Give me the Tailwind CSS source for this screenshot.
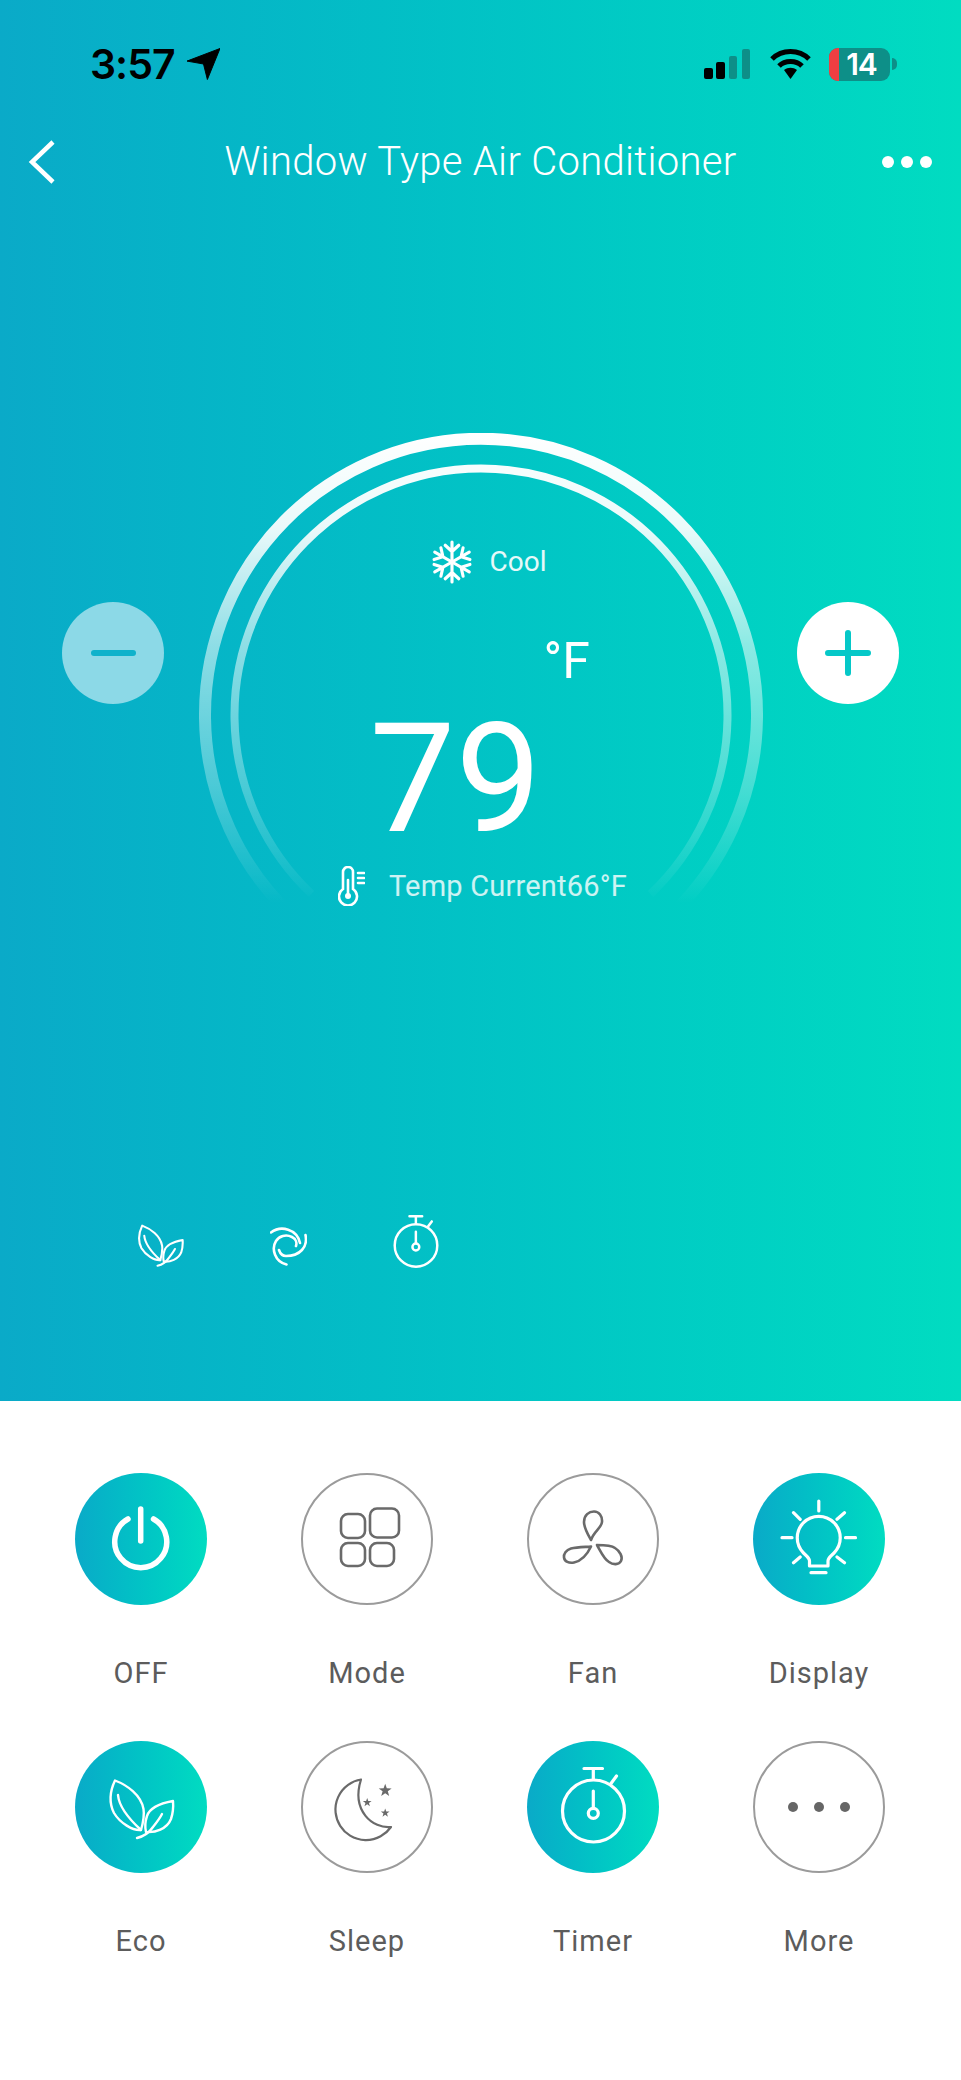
<!DOCTYPE html>
<html lang="en">
<head>
    <meta charset="UTF-8">
    <meta name="viewport" content="width=device-width, initial-scale=1.0">
    <title>Window Type Air Conditioner</title>
    <script src="https://cdn.jsdelivr.net/npm/@tailwindcss/browser@4"></script>
</head>
<body class="w-[961px] h-[2080px] bg-white overflow-hidden font-['Roboto',sans-serif]">

    <!-- control panel top -->
    <section class="h-[1401px] flex flex-col bg-gradient-to-r from-[#0aaac8] to-[#01dcc1] text-white">

        <!-- status bar -->
        <div class="h-[128px] flex items-center pl-[90px] pr-[64px] text-black">
            <span class="font-['Inter',sans-serif] font-semibold text-[41px] leading-none tracking-[-1px]">3:57</span>
            <svg class="ml-[12px] w-[33px] h-[32px]" viewBox="0 0 34 32"><path d="M34 0 L21 32 L17 16 L0 13 Z" fill="#000" stroke="#000" stroke-width="1" stroke-linejoin="round"/></svg>
            <svg class="ml-auto w-[47px] h-[30px]" viewBox="0 0 47 30">
                <rect x="0" y="19" width="9" height="11" rx="2" fill="#000"/>
                <rect x="12" y="13" width="9" height="17" rx="2" fill="#000"/>
                <rect x="25" y="7" width="8" height="23" rx="2" fill="#0d8f88"/>
                <rect x="38" y="0" width="8" height="30" rx="2" fill="#0d8f88"/>
            </svg>
            <svg class="ml-[19px] w-[41px] h-[30px]" viewBox="0 0 41 30" fill="none" stroke="#000" stroke-width="5">
                <path d="M2 10 C12 0 29 0 39 10"/>
                <path d="M9 17 C15 11 26 11 32 17"/>
                <path d="M14 21 L20.5 30 L27 21 C23 18 18 18 14 21Z" fill="#000" stroke="none"/>
            </svg>
            <div class="relative ml-[18px] w-[61px] h-[33px] rounded-[9px] bg-[#0d8f88] overflow-hidden flex items-center justify-center">
                <div class="absolute left-0 top-0 bottom-0 w-[10px] bg-[#ef3e42]"></div>
                <span class="font-['Inter',sans-serif] font-semibold text-white text-[30px] leading-none tracking-[-1px] ml-[4px]">14</span>
            </div>
            <div class="ml-[2px] w-[5px] h-[12px] rounded-r-full bg-[#0d8f88]"></div>
        </div>

        <!-- nav -->
        <div class="relative h-[68px] flex items-center justify-center">
            <svg class="absolute left-[28px] top-[12px] w-[28px] h-[44px]" viewBox="0 0 28 44" fill="none" stroke="#fff" stroke-width="4.5"><path d="M25 2 L4 22 L25 42"/></svg>
            <h1 class="font-[350] text-[40px] leading-none tracking-[0.3px]">Window Type Air Conditioner</h1>
            <div class="absolute right-[29px] top-[28px] flex gap-[7px]">
                <span class="w-[12px] h-[12px] rounded-full bg-white"></span>
                <span class="w-[12px] h-[12px] rounded-full bg-white"></span>
                <span class="w-[12px] h-[12px] rounded-full bg-white"></span>
            </div>
        </div>

        <!-- dial row -->
        <div class="mt-[237px] px-[62px] flex justify-between items-start">
            <button class="mt-[169px] w-[102px] h-[102px] rounded-full bg-[#8cd9e7] flex items-center justify-center">
                <span class="w-[45px] h-[6px] rounded-full bg-[#0fb2cb]"></span>
            </button>

            <div class="relative w-[564px] h-[482px] flex flex-col items-center pt-[108px]">
                <svg class="absolute left-0 top-0 w-[564px] h-[482px]" viewBox="0 0 564 482" fill="none">
                    <defs>
                        <linearGradient id="ringFade" gradientUnits="userSpaceOnUse" x1="0" y1="0" x2="0" y2="470">
                            <stop offset="0" stop-color="#fff"/>
                            <stop offset="0.2" stop-color="#fff" stop-opacity="0.92"/>
                            <stop offset="0.45" stop-color="#fff" stop-opacity="0.55"/>
                            <stop offset="0.75" stop-color="#fff" stop-opacity="0.28"/>
                            <stop offset="1" stop-color="#fff" stop-opacity="0"/>
                        </linearGradient>
                    </defs>
                    <path d="M91 481 A276 276 0 1 1 473 481" stroke="url(#ringFade)" stroke-width="12"/>
                    <path d="M112.5 461 A246.5 246.5 0 1 1 451.5 461" stroke="url(#ringFade)" stroke-width="8"/>
                </svg>

                <div class="relative h-[42px] flex items-center ml-[15px]">
                    <svg class="w-[44px] h-[44px]" viewBox="0 0 42 42" fill="none" stroke="#fff" stroke-width="3" stroke-linecap="round">
                        <g id="flakeArm"><path d="M21 21 V2 M14.5 5 L21 11 L27.5 5"/></g>
                        <use href="#flakeArm" transform="rotate(60 21 21)"/>
                        <use href="#flakeArm" transform="rotate(120 21 21)"/>
                        <use href="#flakeArm" transform="rotate(180 21 21)"/>
                        <use href="#flakeArm" transform="rotate(240 21 21)"/>
                        <use href="#flakeArm" transform="rotate(300 21 21)"/>
                    </svg>
                    <span class="ml-[16px] text-[28px] leading-none text-white/90">Cool</span>
                </div>

                <div class="relative self-start ml-[345px] mt-[53px] text-[50px] leading-none">°F</div>

                <div class="relative mt-[28px] -ml-[50px] font-normal text-[153px] leading-[130px]">79</div>

                <div class="relative mt-[22px] flex items-center ml-[4px]">
                    <svg class="w-[27px] h-[40px]" viewBox="0 0 27 40" fill="none" stroke="#fff" stroke-width="2.6" stroke-linecap="round">
                        <path d="M5 23 V6 A5 5 0 0 1 15 6 V23 A9 9 0 1 1 5 23Z"/>
                        <circle cx="10" cy="30" r="3" fill="#fff" stroke="none"/>
                        <path d="M10 29 V14"/>
                        <path d="M20 7 H26 M20 12 H26 M20 17 H26"/>
                    </svg>
                    <span class="ml-[24px] text-[29px] leading-none tracking-[0.2px] text-white/80">Temp Current66°F</span>
                </div>
            </div>

            <button class="mt-[169px] w-[102px] h-[102px] rounded-full bg-white flex items-center justify-center">
                <svg class="w-[46px] h-[46px]" viewBox="0 0 46 46" fill="none" stroke="#05c8c8" stroke-width="6" stroke-linecap="round"><path d="M23 3 V43 M3 23 H43"/></svg>
            </button>
        </div>

        <!-- status icons -->
        <div class="mt-auto pb-[132px] pl-[138px] flex items-end gap-[86px]">
            <svg class="w-[46px] h-[43px] mb-[2px]" viewBox="34 38 66 60" fill="none" stroke="#fff" stroke-width="3" stroke-linecap="round" stroke-linejoin="round">
                <path d="M40 39.5 C52 44 66 54 68.5 68 C69.5 74 68 82 66 89 C58 90 45 82 39 72 C34 62 35 50 40 39.5Z"/>
                <path d="M43 54 C44 66 54 78 66 89"/>
                <path d="M98 60 C87 62 75 66 72 75 C70 81 70 87 71 91 C80 92 92 88 96 78 C98 72 98.5 66 98 60Z"/>
                <path d="M62 97 C70 95 74 92 78 86 C82 81 85 77 87 73"/>
            </svg>
            <svg class="w-[37px] h-[39px] mb-[3px]" viewBox="0 0 37 39" fill="none" stroke="#fff" stroke-width="2.6" stroke-linecap="round">
                <path d="M1 5.5 C11 -2 27 2 30 16"/>
                <path d="M35.5 8 C38 20 30 29 16 29 C12 29 10 26 9 23"/>
                <path d="M16.5 37.5 C5 35 1 22 6 14 C9 9 16 7 22 10 C26 12 27 16 26 19"/>
            </svg>
            <svg class="w-[46px] h-[54px]" viewBox="33 26 67 78" fill="none" stroke="#fff" stroke-width="3.6" stroke-linecap="round">
                <circle cx="66.5" cy="70" r="31"/>
                <path d="M57 27.5 H75.5 M66.3 27.5 V38 M84 42.5 L89.5 35 M66.3 50 V66"/>
                <circle cx="66.3" cy="72.3" r="5"/>
            </svg>
        </div>
    </section>

    <!-- function buttons -->
    <section class="pt-[72px] pl-[28px] pr-[29px] grid grid-cols-4 gap-y-[50px] text-[#5c5c5c] text-[29px] leading-[36px] tracking-[1px]">

        <div class="flex flex-col items-center gap-[50px]">
            <div class="w-[132px] h-[132px] rounded-full bg-gradient-to-r from-[#0aaac8] to-[#01dcc1]">
                <svg class="w-[132px] h-[132px]" viewBox="0 0 132 132" fill="none" stroke="#fff" stroke-width="5.5" stroke-linecap="round">
                    <path d="M53 46 A26 26 0 1 0 78.5 46"/>
                    <path d="M65.7 36 V68"/>
                </svg>
            </div>
            <span>OFF</span>
        </div>

        <div class="flex flex-col items-center gap-[50px]">
            <div class="w-[132px] h-[132px] rounded-full border-2 border-[#9b9b9b]">
                <svg class="-m-[2px] w-[132px] h-[132px]" viewBox="0 0 132 132" fill="none" stroke="#6a6a6a" stroke-width="2.6">
                    <rect x="40" y="41" width="24" height="24" rx="7"/>
                    <rect x="69" y="35.5" width="29" height="29" rx="7"/>
                    <rect x="40" y="70" width="24" height="23" rx="7"/>
                    <rect x="69" y="70" width="24" height="23" rx="7"/>
                </svg>
            </div>
            <span>Mode</span>
        </div>

        <div class="flex flex-col items-center gap-[50px]">
            <div class="w-[132px] h-[132px] rounded-full border-2 border-[#9b9b9b]">
                <svg class="-m-[2px] w-[132px] h-[132px]" viewBox="0 0 132 132" fill="none" stroke="#6a6a6a" stroke-width="2.6" stroke-linejoin="round">
                    <path d="M64 67 C60 60 57 55 57 49 C57 42 62 38.5 67 38.5 C72 38.5 75.5 43 75 49 C74.5 55 67 58 64 67Z"/>
                    <path d="M64 73.5 C58 74 50 74 44 75.5 C39 77 36.5 81 37 84.5 C37.5 88.5 42 90.5 47 89.5 C54 88 60 82 64 73.5Z"/>
                    <path d="M70 72 C76 72 84 72 88 75 C93 78 96 84 94 88 C92 92 86 92 82 89 C77 86 74 79 70 72Z"/>
                </svg>
            </div>
            <span>Fan</span>
        </div>

        <div class="flex flex-col items-center gap-[50px]">
            <div class="w-[132px] h-[132px] rounded-full bg-gradient-to-r from-[#0aaac8] to-[#01dcc1]">
                <svg class="w-[132px] h-[132px]" viewBox="0 0 132 132" fill="none" stroke="#fff" stroke-width="3.2" stroke-linecap="round" stroke-linejoin="round">
                    <path d="M56.5 93 H75 V88 C75 85 78 83 81 80 A21.5 21.5 0 1 0 50.5 80 C53.5 83 56.5 85 56.5 88Z"/>
                    <path d="M58 99.7 H73"/>
                    <path d="M65.8 28 V38 M29 64.7 H39 M92.5 64.7 H102.5 M40.5 39.7 L47.2 46.3 M91.5 39.7 L84 46.3 M40.5 89.7 L47.2 84 M91.5 89.7 L84 84"/>
                </svg>
            </div>
            <span>Display</span>
        </div>

        <div class="flex flex-col items-center gap-[50px]">
            <div class="w-[132px] h-[132px] rounded-full bg-gradient-to-r from-[#0aaac8] to-[#01dcc1]">
                <svg class="w-[132px] h-[132px]" viewBox="0 0 132 132" fill="none" stroke="#fff" stroke-width="2.4" stroke-linecap="round" stroke-linejoin="round">
                    <path d="M40 39.5 C52 44 66 54 68.5 68 C69.5 74 68 82 66 89 C58 90 45 82 39 72 C34 62 35 50 40 39.5Z"/>
                    <path d="M43 54 C44 66 54 78 66 89"/>
                    <path d="M98 60 C87 62 75 66 72 75 C70 81 70 87 71 91 C80 92 92 88 96 78 C98 72 98.5 66 98 60Z"/>
                    <path d="M62 97 C70 95 74 92 78 86 C82 81 85 77 87 73"/>
                </svg>
            </div>
            <span>Eco</span>
        </div>

        <div class="flex flex-col items-center gap-[50px]">
            <div class="w-[132px] h-[132px] rounded-full border-2 border-[#9b9b9b]">
                <svg class="-m-[2px] w-[132px] h-[132px]" viewBox="0 0 132 132" fill="none" stroke="#6a6a6a" stroke-width="2.2" stroke-linejoin="round">
                    <path d="M60 38.5 A30.5 30.5 0 1 0 90 86 C72 88 50 70 60 38.5Z"/>
                    <g fill="#6a6a6a" stroke="none">
                        <polygon transform="translate(84.2 49.5) scale(6.8)" points="0,-1 0.235,-0.324 0.951,-0.309 0.38,0.124 0.588,0.809 0,0.4 -0.588,0.809 -0.38,0.124 -0.951,-0.309 -0.235,-0.324"/>
                        <polygon transform="translate(66.2 61.5) scale(4.6)" points="0,-1 0.235,-0.324 0.951,-0.309 0.38,0.124 0.588,0.809 0,0.4 -0.588,0.809 -0.38,0.124 -0.951,-0.309 -0.235,-0.324"/>
                        <polygon transform="translate(84.2 72) scale(4.6)" points="0,-1 0.235,-0.324 0.951,-0.309 0.38,0.124 0.588,0.809 0,0.4 -0.588,0.809 -0.38,0.124 -0.951,-0.309 -0.235,-0.324"/>
                    </g>
                </svg>
            </div>
            <span>Sleep</span>
        </div>

        <div class="flex flex-col items-center gap-[50px]">
            <div class="w-[132px] h-[132px] rounded-full bg-gradient-to-r from-[#0aaac8] to-[#01dcc1]">
                <svg class="w-[132px] h-[132px]" viewBox="0 0 132 132" fill="none" stroke="#fff" stroke-width="3.2" stroke-linecap="round">
                    <circle cx="66.5" cy="70" r="31"/>
                    <path d="M57 27.5 H75.5 M66.3 27.5 V38 M84 42.5 L89.5 35 M66.3 50 V66"/>
                    <circle cx="66.3" cy="72.3" r="5"/>
                </svg>
            </div>
            <span>Timer</span>
        </div>

        <div class="flex flex-col items-center gap-[50px]">
            <div class="w-[132px] h-[132px] rounded-full border-2 border-[#9b9b9b] flex items-center justify-center gap-[16px]">
                <span class="w-[10px] h-[10px] rounded-full bg-[#666]"></span>
                <span class="w-[10px] h-[10px] rounded-full bg-[#666]"></span>
                <span class="w-[10px] h-[10px] rounded-full bg-[#666]"></span>
            </div>
            <span>More</span>
        </div>
    </section>
</body>
</html>
